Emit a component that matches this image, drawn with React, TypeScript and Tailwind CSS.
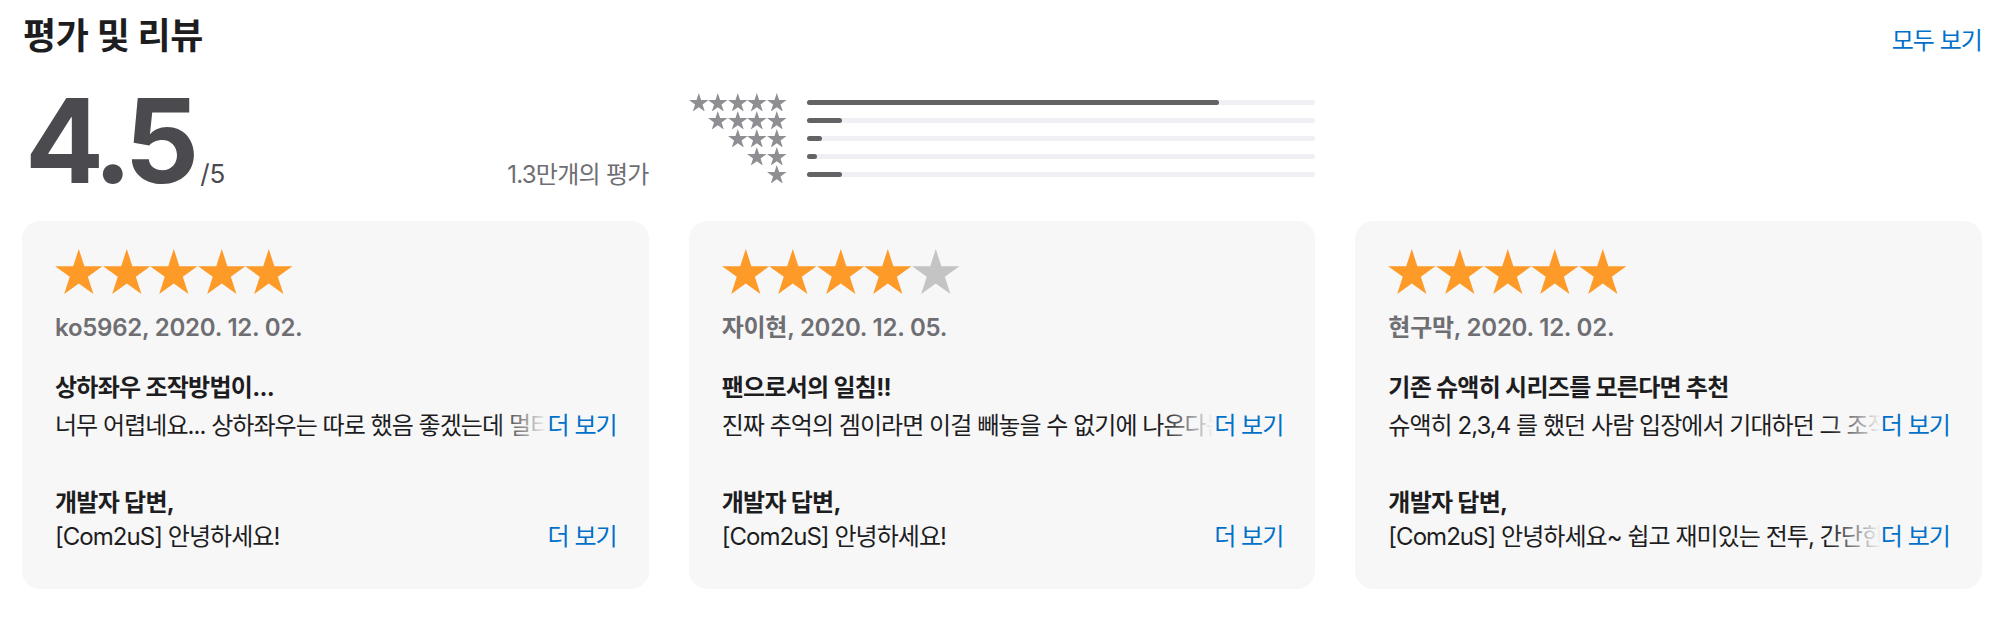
import React from "react";

const STAR_POINTS =
  "50,0 61.8,36.33 100,36.33 69.1,58.8 80.9,95.1 50,72.65 19.1,95.1 30.9,58.8 0,36.33 38.2,36.33";

function Star({ className, color }: { className: string; color: string }) {
  return (
    <svg viewBox="0 0 100 95.1" className={className} aria-hidden="true">
      <polygon points={STAR_POINTS} fill={color} />
    </svg>
  );
}

const hist = [
  { stars: 5, pct: 81 },
  { stars: 4, pct: 7 },
  { stars: 3, pct: 3 },
  { stars: 2, pct: 2 },
  { stars: 1, pct: 7 },
];

type Review = {
  rating: number;
  user: string;
  title: string;
  body: string;
  response: string;
};

const reviews: Review[] = [
  {
    rating: 5,
    user: "ko5962, 2020. 12. 02.",
    title: "상하좌우 조작방법이...",
    body: "너무 어렵네요... 상하좌우는 따로 했음 좋겠는데 멀티터치가 안 되네요",
    response: "[Com2uS] 안녕하세요!",
  },
  {
    rating: 4,
    user: "자이현, 2020. 12. 05.",
    title: "팬으로서의 일침!!",
    body: "진짜 추억의 겜이라면 이걸 빼놓을 수 없기에 나온다는 소식에 바로 받았습니다",
    response: "[Com2uS] 안녕하세요!",
  },
  {
    rating: 5,
    user: "현구막, 2020. 12. 02.",
    title: "기존 슈액히 시리즈를 모른다면 추천",
    body: "슈액히 2,3,4 를 했던 사람 입장에서 기대하던 그 조작감이 아니라서 아쉽네요",
    response: "[Com2uS] 안녕하세요~ 쉽고 재미있는 전투, 간단한 조작으로",
  },
];

function MoreLine({ text, className }: { text: string; className: string }) {
  return (
    <div
      className={
        "relative h-[38px] overflow-hidden whitespace-nowrap leading-[38px] tracking-[-0.04em] " +
        className
      }
    >
      <span>{text}</span>
      <span className="absolute right-0 top-0 flex h-full">
        <span className="h-full w-[52px] bg-gradient-to-r from-[rgba(247,247,247,0)] to-[#f7f7f7]" />
        <span className="h-full bg-[#f7f7f7] text-[#0070c9]">더 보기</span>
      </span>
    </div>
  );
}

function ReviewCard({ r }: { r: Review }) {
  return (
    <div className="rounded-[18px] bg-[#f7f7f7] pb-[33px] pl-[33px] pr-[32px] pt-[28px] text-[24px] text-[#1d1d1f]">
      <div className="flex">
        {[0, 1, 2, 3, 4].map((i) => (
          <Star
            key={i}
            className="h-[45px] w-[47.6px]"
            color={i < r.rating ? "#fd9a28" : "#c4c4c4"}
          />
        ))}
      </div>
      <div className="mt-[15px] font-semibold leading-[38px] tracking-[-0.01em] text-[#6e6e73]">
        {r.user}
      </div>
      <div className="mt-[22px] font-bold leading-[38px] tracking-[-0.03em]">{r.title}</div>
      <MoreLine text={r.body} className="" />
      <div className="mt-[39px] font-bold leading-[38px] tracking-[-0.03em]">개발자 답변,</div>
      <MoreLine text={r.response} className="-mt-[4px]" />
    </div>
  );
}

export default function App() {
  return (
    <div className="h-[628px] w-full overflow-hidden bg-white pl-[22px] pr-[16px] pt-[16px] font-['Inter','Noto_Sans_CJK_KR',sans-serif] text-[#1d1d1f]">
      <div className="flex items-baseline justify-between">
        <h2 className="pl-[1px] text-[36px] font-bold leading-[40px] tracking-[-0.01em] text-[#1d1d1f]">
          평가 및 리뷰
        </h2>
        <a className="text-[24px] leading-[40px] tracking-[-0.04em] text-[#0070c9]">모두 보기</a>
      </div>

      <div className="mt-[21px] grid grid-cols-3 gap-x-[40px]">
        <div className="flex items-baseline justify-between">
          <div className="flex items-baseline">
            <span className="pl-[3px] text-[117px] font-bold leading-[117px] tracking-[-0.06em] text-[#4a4a4f]">
              4.5
            </span>
            <span className="ml-[8px] text-[26px] text-[#4a4a4f]">/5</span>
          </div>
          <span className="text-[24px] tracking-[-0.03em] text-[#6e6e73]">1.3만개의 평가</span>
        </div>

        <div className="flex flex-col pt-[11px]">
          {hist.map((h) => (
            <div key={h.stars} className="flex h-[18px] items-center gap-[20px]">
              <div className="flex w-[98px] justify-end">
                {Array.from({ length: h.stars }).map((_, i) => (
                  <Star key={i} className="h-[18.6px] w-[19.6px]" color="#8e8e93" />
                ))}
              </div>
              <div className="h-[5px] flex-1 rounded-full bg-[#efeff4]">
                <div
                  className="h-full rounded-full bg-[#636366]"
                  style={{ width: `${h.pct}%` }}
                />
              </div>
            </div>
          ))}
        </div>
        <div />
      </div>

      <div className="mt-[22px] grid grid-cols-3 gap-x-[40px]">
        {reviews.map((r, i) => (
          <ReviewCard key={i} r={r} />
        ))}
      </div>
    </div>
  );
}
